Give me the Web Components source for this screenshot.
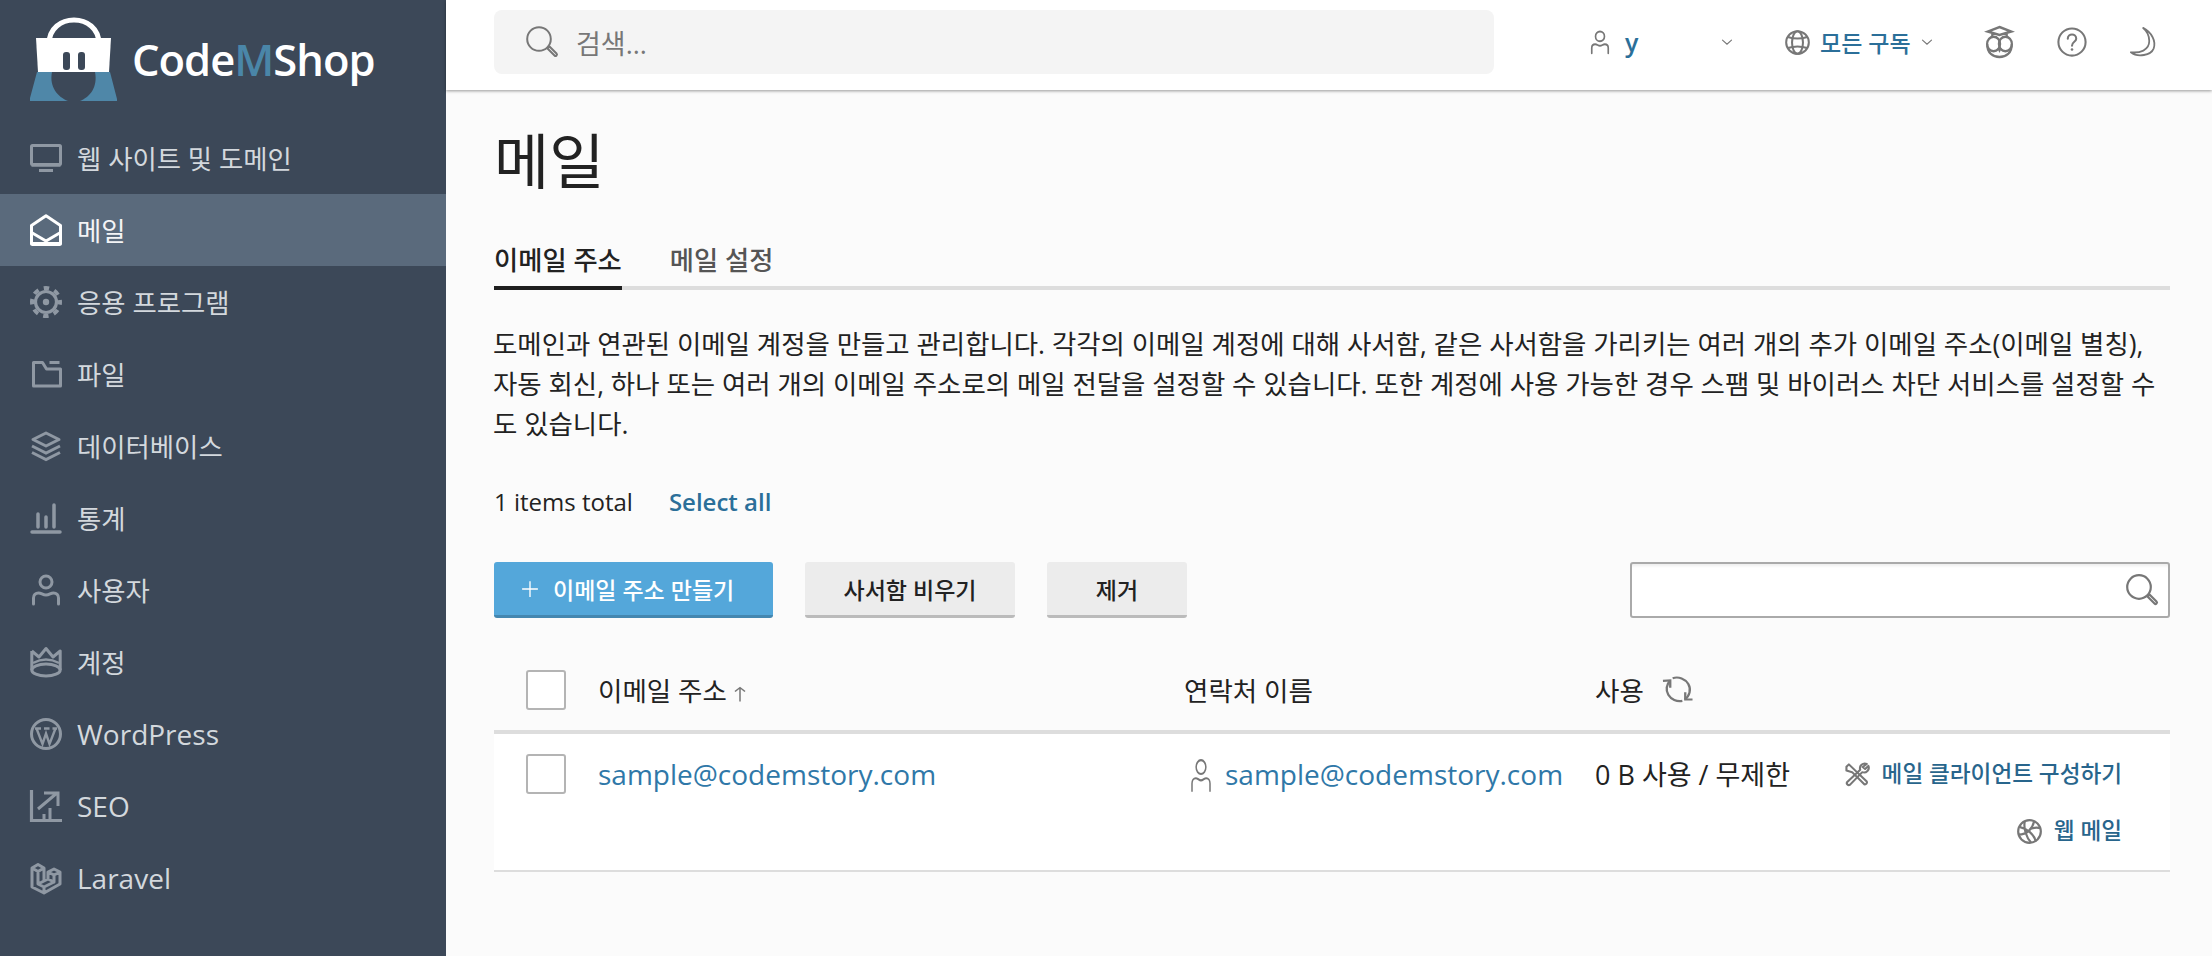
<!DOCTYPE html>
<html lang="ko">
<head>
<meta charset="utf-8">
<title>메일</title>
<style>
  html, body { margin: 0; height: 100%; }
  body {
    font-family: "Open Sans", "Noto Sans CJK KR", sans-serif;
    font-size: 24px;
    color: #222;
    background: #fbfbfb;
    overflow: hidden;
  }
</style>
</head>
<body>
<app-shell>
  <side-nav slot="side">
    <nav-item icon="monitor">웹 사이트 및 도메인</nav-item>
    <nav-item icon="mail" active>메일</nav-item>
    <nav-item icon="gear">응용 프로그램</nav-item>
    <nav-item icon="folder">파일</nav-item>
    <nav-item icon="layers">데이터베이스</nav-item>
    <nav-item icon="bars">통계</nav-item>
    <nav-item icon="person">사용자</nav-item>
    <nav-item icon="crown">계정</nav-item>
    <nav-item icon="wp" latin>WordPress</nav-item>
    <nav-item icon="seo" latin>SEO</nav-item>
    <nav-item icon="laravel" latin>Laravel</nav-item>
  </side-nav>
  <top-bar slot="top"></top-bar>
  <page-head></page-head>
  <mail-toolbar></mail-toolbar>
  <mail-table>
    <mail-row email="sample@codemstory.com" usage="0 B 사용 / 무제한"></mail-row>
  </mail-table>
</app-shell>

<script>
const ICONS = {
  monitor: '<rect x="1.5" y="3.5" width="29" height="19" rx="1"/><path d="M1.5 23h29" stroke-width="3.5"/><path d="M9 28.5h14" stroke-width="3"/>',
  mail: '<path d="M1.5 30V11.5L16 1.8 30.5 11.5V30Z" stroke-linejoin="round"/><path d="M1.5 30H30.5" stroke-width="4"/><path d="M1.5 18.5 16 27 30.5 18.5"/>',
  gear: '<circle cx="16" cy="16" r="10.5" stroke-width="3.2"/><circle cx="16" cy="16" r="14" stroke-width="4" stroke-dasharray="5.5 5.5" stroke-dashoffset="2.75"/><circle cx="16" cy="16" r="3.2" fill="currentColor" stroke="none"/>',
  folder: '<path d="M3.5 4.5h9l4 6.5H30.5v17H3.5z" stroke-linejoin="round"/><path d="M19.5 4.5h10"/>',
  layers: '<path d="M16 3 29 9.5 16 16 3 9.5Z" stroke-linejoin="round"/><path d="M2 16 16 23 30 16"/><path d="M2 22.5 16 29.5 30 22.5"/>',
  bars: '<path d="M2 30H30" stroke-width="3.5" stroke-linecap="round"/><path d="M8 12V25M16 15V25M24 3V25" stroke-width="3.5" stroke-linecap="round"/>',
  person: '<circle cx="16" cy="8" r="6"/><path d="M3.5 30V24c0-3 2-5 5-5 3 0 4 2 7.5 2s4.5-2 7.5-2c3 0 5 2 5 5v6" stroke-linecap="round"/>',
  crown: '<path d="M1.8 5 9 11 16 2.5 23 11 30.2 5V24M1.8 5V24" stroke-linejoin="round"/><ellipse cx="16" cy="24" rx="14.2" ry="6"/><path d="M3 17Q16 10 29 17" stroke-width="2.5"/>',
  wp: '<circle cx="16" cy="16" r="14.5"/><path d="M6.5 10.5 12.5 26 16 15.5 19.5 26 25.5 10.5M5 10.5H11M14 10.5H19.5M22.5 10.5H27" stroke-width="2.4"/>',
  seo: '<path d="M1.5 0V30.5H32" stroke-width="3.2"/><path d="M8 19 27 3M14 3H28V16" stroke-width="3"/><path d="M14 30V24M20 30V18" stroke-width="3"/>',
  laravel: '<path d="M2 6 8 2.5 14 6 8 9.5ZM2 6V25L14 31 30 22V10L24 7 18 10 24 13 30 10M8 9.5V22L14 25M14 6V19M8 22 14 19 18 17M18 10V17L24 20V13M14 25 24 20M14 25V31" stroke-linejoin="round"/>',
  user: '<circle cx="16" cy="8.5" r="6.5"/><path d="M4 31V24c0-3 2-5 5-5 3 0 4 2 7 2s4-2 7-2c3 0 5 2 5 5v7" stroke-linecap="round"/>',
  globe: '<circle cx="16" cy="16" r="14.5"/><ellipse cx="16" cy="16" rx="7" ry="14.5"/><path d="M3.5 9Q16 13 28.5 9M3.5 23Q16 19 28.5 23"/>',
  owl: '<circle cx="9.5" cy="18" r="7.2"/><circle cx="22.5" cy="18" r="7.2"/><path d="M2.5 18C2 27 9 31 16 31S30 27 29.5 18"/><path d="M16 27 13.5 22H18.5Z" fill="currentColor" stroke="none"/><path d="M16 1 29 5.5 16 9 3 5.5ZM8 7.5V11M24 7.5V11"/>',
  help: '<circle cx="16" cy="16" r="14.5"/><path d="M11.5 12.5C11.5 6.5 20.5 6.5 20.5 12.5 20.5 16 16 15.5 16 20" stroke-linecap="round"/><circle cx="16" cy="24" r="1.4" fill="currentColor" stroke="none"/>',
  moon: '<path d="M15 1C25 6 30 15 27 23 24 30 9 33 1 27 11 28 22 25 22 15 22 9 19 4 15 1Z" stroke-linejoin="round"/>',
  search: '<circle cx="13" cy="13" r="11.8"/><path d="M21.5 22.5l2-2 7 7a1.4 1.4 0 01-2 2z" stroke-linejoin="round"/>',
  refresh: '<path d="M8.5 6A13.5 13.5 0 0 0 21 28.5"/><path d="M11 3.5A13.5 13.5 0 0 1 23.5 27"/><path d="M1 6.5 8.5 6V14M24 19V27H31.5"/>',
  tools: '<path d="M3 6 6 3 14 11 28 25A2.5 2.5 0 0 1 25 28.5L10 13 3 11Z" stroke-linejoin="round"/><path d="M28 2.5A6 6 0 0 0 20 10L4 25.5A2.5 2.5 0 0 0 7.5 29L22.5 13A6 6 0 0 0 30 5L26 9 23 6.5Z" stroke-linejoin="round"/>',
  web: '<circle cx="16" cy="16" r="14.5"/><path d="M3 10C12 12 22 19 24 29M10 3C8 12 12 24 18 30M22 3C20 12 13 20 2 20M16 13C21 11 26 10 30 12"/>',
  chevron: '<path d="M4 11 16 22 28 11" stroke-linecap="round"/>',
  plus: '<path d="M16 2V30M2 16H30"/>',
  arrow: '<path d="M16 31V3M8 11 16 3 24 11"/>'
}

class UiIcon extends HTMLElement {
  constructor () {
    super()
    this.attachShadow({ mode: 'open' })
  }

  connectedCallback () {
    const name = this.getAttribute('name')
    const w = this.getAttribute('w') || 32
    const h = this.getAttribute('h') || w
    const sw = this.getAttribute('sw') || 3
    this.shadowRoot.innerHTML = `
      <style>
        :host { display: inline-flex; flex: none; }
        svg { display: block; fill: none; stroke: currentColor; overflow: visible; }
      </style>
      <svg width="${w}" height="${h}" viewBox="0 0 32 32" preserveAspectRatio="none" stroke-width="${sw}">${ICONS[name]}</svg>
    `
  }
}

class AppShell extends HTMLElement {
  constructor () {
    super()
    this.attachShadow({ mode: 'open' })
  }

  connectedCallback () {
    this.shadowRoot.innerHTML = `
      <style>
        :host { display: flex; width: 2212px; height: 956px; }
        .col { flex: 1; min-width: 0; display: flex; flex-direction: column; }
        .content { padding: 0 42px 0 48px; display: flex; flex-direction: column; }
      </style>
      <slot name="side"></slot>
      <div class="col">
        <slot name="top"></slot>
        <div class="content"><slot></slot></div>
      </div>
    `
  }
}

class SideNav extends HTMLElement {
  constructor () {
    super()
    this.attachShadow({ mode: 'open' })
  }

  connectedCallback () {
    this.shadowRoot.innerHTML = `
      <style>
        :host { display: block; flex: none; width: 446px; background: #3c4858; }
        .logo { height: 122px; display: flex; align-items: flex-start; padding: 14px 0 0 30px; box-sizing: border-box; gap: 14px; }
        .word { font: 600 43.5px/1 "Open Sans", sans-serif; color: #fff; letter-spacing: -1px; margin-top: 24px; }
        .word b { font-weight: 600; color: #4a86a8; }
      </style>
      <div class="logo">
        <svg width="88" height="88" viewBox="0 0 88 88">
          <path d="M19 30C19 -2 69 -2 69 30" fill="none" stroke="#fff" stroke-width="5"/>
          <path d="M6 24H81L79 58H8Z" fill="#fff"/>
          <path d="M7 58H80L87 85 87 87H50C60 83 68 73 65 58H22C19 73 28 83 38 87H0V84Z" fill="#4f87a8"/>
          <rect x="33" y="38" width="7" height="18" rx="3" fill="#3c4858"/>
          <rect x="48" y="38" width="7" height="18" rx="3" fill="#3c4858"/>
        </svg>
        <div class="word">Code<b>M</b>Shop</div>
      </div>
      <slot></slot>
    `
  }
}

class NavItem extends HTMLElement {
  constructor () {
    super()
    this.attachShadow({ mode: 'open' })
  }

  connectedCallback () {
    const active = this.hasAttribute('active')
    const latin = this.hasAttribute('latin')
    this.shadowRoot.innerHTML = `
      <style>
        :host { display: flex; align-items: center; gap: 15px; height: 72px; padding-left: 30px; font-size: ${latin ? 28 : 26.4}px; color: ${active ? '#f3f4f6' : '#d3d8dd'}; background: ${active ? '#5a6a7c' : 'transparent'}; }
        .ic { color: ${active ? '#fff' : '#8f98a3'}; display: flex; }
        .txt { margin-bottom: ${latin ? 0 : 2}px; }
      </style>
      <span class="ic"><ui-icon name="${this.getAttribute('icon')}"></ui-icon></span>
      <span class="txt"><slot></slot></span>
    `
  }
}

class TopBar extends HTMLElement {
  constructor () {
    super()
    this.attachShadow({ mode: 'open' })
  }

  connectedCallback () {
    this.shadowRoot.innerHTML = `
      <style>
        :host { display: flex; align-items: center; height: 90px; flex: none; background: #fff; box-shadow: 0 1px 3px rgba(0,0,0,.4); padding-left: 48px; position: relative; color: #777; }
        .search { width: 1000px; height: 64px; margin-bottom: 6px; box-sizing: border-box; background: #f4f4f4; border-radius: 8px; display: flex; align-items: center; gap: 18px; padding-left: 32px; font-size: 27px; color: #777; }
        .right { display: flex; align-items: center; margin-left: 95px; margin-bottom: 6px; }
        .link { color: #2b6f99; font-weight: 600; font-size: 25px; }
        .han { font-weight: 500; font-size: 23px; }
      </style>
      <div class="search"><ui-icon name="search" sw="2"></ui-icon><span>검색...</span></div>
      <div class="right">
        <ui-icon name="user" w="22" h="24" sw="2.4"></ui-icon>
        <span class="link" style="margin-left:14px;width:96px">y</span>
        <ui-icon name="chevron" w="12" sw="3"></ui-icon>
        <ui-icon name="globe" w="25" h="25" sw="2.6" style="margin-left:52px"></ui-icon>
        <span class="link han" style="margin-left:10px;width:101px">모든 구독</span>
        <ui-icon name="chevron" w="12" sw="3"></ui-icon>
        <ui-icon name="owl" w="29" h="32" sw="2.4" style="margin-left:52px"></ui-icon>
        <ui-icon name="help" w="30" h="30" sw="2.2" style="margin-left:43px"></ui-icon>
        <ui-icon name="moon" w="28" h="30" sw="2" style="margin-left:43px"></ui-icon>
      </div>
    `
  }
}

class PageHead extends HTMLElement {
  constructor () {
    super()
    this.attachShadow({ mode: 'open' })
  }

  connectedCallback () {
    this.shadowRoot.innerHTML = `
      <style>
        :host { display: block; }
        h1 { margin: 34px 0 0; font-size: 60px; line-height: 74px; font-weight: 400; color: #222; }
        .tabs { display: flex; gap: 48px; margin-top: 42px; border-bottom: 4px solid #ddd; height: 46px; font-size: 26.3px; }
        .tab { height: 46px; line-height: 40px; font-weight: 500; color: #555; }
        .tab.on { color: #222; border-bottom: 4px solid #1f1f1f; }
        p { margin: 34px 0 0 -1px; font-size: 26.45px; line-height: 40px; color: #222; }
        .count { display: flex; gap: 36px; margin-top: 38px; font-size: 24px; line-height: 40px; }
        .count a { color: #2b6f99; font-weight: 600; }
      </style>
      <h1>메일</h1>
      <div class="tabs"><div class="tab on">이메일 주소</div><div class="tab">메일 설정</div></div>
      <p>도메인과 연관된 이메일 계정을 만들고 관리합니다. 각각의 이메일 계정에 대해 사서함, 같은 사서함을 가리키는 여러 개의 추가 이메일 주소(이메일 별칭), 자동 회신, 하나 또는 여러 개의 이메일 주소로의 메일 전달을 설정할 수 있습니다. 또한 계정에 사용 가능한 경우 스팸 및 바이러스 차단 서비스를 설정할 수도 있습니다.</p>
      <div class="count"><span>1 items total</span><a>Select all</a></div>
    `
  }
}

class MailToolbar extends HTMLElement {
  constructor () {
    super()
    this.attachShadow({ mode: 'open' })
  }

  connectedCallback () {
    this.shadowRoot.innerHTML = `
      <style>
        :host { display: flex; align-items: flex-start; gap: 32px; margin-top: 40px; }
        .btn { height: 56px; box-sizing: border-box; display: flex; align-items: center; justify-content: center; gap: 14px; background: #ececec; border-bottom: 3px solid #bbb; border-radius: 3px; font-size: 23px; font-weight: 500; color: #222; }
        .primary { width: 279px; justify-content: flex-start; padding-left: 27px; background: #54a7da; border-bottom-color: #4487b0; color: #fff; }
        .find { margin-left: auto; width: 540px; height: 56px; box-sizing: border-box; background: #fff; border: 2px solid #aaa; border-radius: 3px; box-shadow: inset 0 4px 3px -2px #eee; display: flex; align-items: center; justify-content: flex-end; padding-right: 10px; color: #777; }
      </style>
      <div class="btn primary"><ui-icon name="plus" w="18" sw="2.4"></ui-icon>이메일 주소 만들기</div>
      <div class="btn" style="width:210px">사서함 비우기</div>
      <div class="btn" style="width:140px">제거</div>
      <div class="find"><ui-icon name="search" w="32" sw="2.2"></ui-icon></div>
    `
  }
}

class MailTable extends HTMLElement {
  constructor () {
    super()
    this.attachShadow({ mode: 'open' })
  }

  connectedCallback () {
    this.shadowRoot.innerHTML = `
      <style>
        :host { display: block; margin-top: 33px; --cols: 104px 586px 411px 230px 1fr; }
        .head { display: grid; grid-template-columns: var(--cols); align-items: center; height: 77px; padding-bottom: 2px; border-bottom: 4px solid #ddd; font-size: 26.5px; }
        .box { width: 40px; height: 40px; box-sizing: border-box; margin-left: 32px; border: 2px solid #b4b4b4; border-radius: 3px; background: #fff; }
        .cell { display: flex; align-items: center; }
        .sort { color: #777; margin-left: 3px; margin-top: 4px; }
        .sync { color: #777; margin-left: 18px; margin-top: 8px; }
      </style>
      <div class="head">
        <div class="box"></div>
        <div class="cell">이메일 주소<span class="sort"><ui-icon name="arrow" w="20" h="16" sw="2.4"></ui-icon></span></div>
        <div class="cell">연락처 이름</div>
        <div class="cell">사용<span class="sync"><ui-icon name="refresh" w="31" h="29" sw="2.4"></ui-icon></span></div>
      </div>
      <slot></slot>
    `
  }
}

class MailRow extends HTMLElement {
  constructor () {
    super()
    this.attachShadow({ mode: 'open' })
  }

  connectedCallback () {
    const email = this.getAttribute('email')
    this.shadowRoot.innerHTML = `
      <style>
        :host { display: grid; grid-template-columns: var(--cols); align-items: start; height: 138px; box-sizing: border-box; padding-top: 20px; background: #fff; border-bottom: 2px solid #ddd; font-size: 28px; }
        .box { width: 40px; height: 40px; box-sizing: border-box; margin-left: 32px; border: 2px solid #b4b4b4; border-radius: 3px; background: #fff; }
        a { color: #2f78a8; line-height: 40px; }
        .cell { display: flex; align-items: center; gap: 12px; height: 40px; }
        .contact { padding-left: 5px; color: #777; }
        .contact ui-icon { margin-top: 2px; }
        .acts { display: flex; flex-direction: column; align-items: flex-end; padding-right: 48px; gap: 21px; margin-top: 2px; color: #777; }
        .act { display: flex; align-items: center; gap: 12px; height: 36px; font-size: 22.6px; font-weight: 500; color: #777; white-space: nowrap; }
        .act a { color: #28658c; line-height: 36px; }
        .usage { color: #222; font-size: 27px; white-space: nowrap; margin-top: -1px; }
      </style>
      <div class="box"></div>
      <div class="cell"><a>${email}</a></div>
      <div class="cell contact"><ui-icon name="user" w="24" h="34" sw="2"></ui-icon><a>${email}</a></div>
      <div class="cell usage">${this.getAttribute('usage')}</div>
      <div class="acts">
        <div class="act"><ui-icon name="tools" w="26" h="25" sw="2.6"></ui-icon><a>메일 클라이언트 구성하기</a></div>
        <div class="act"><ui-icon name="web" w="25" h="25" sw="2.8"></ui-icon><a>웹 메일</a></div>
      </div>
    `
  }
}

customElements.define('ui-icon', UiIcon)
customElements.define('app-shell', AppShell)
customElements.define('side-nav', SideNav)
customElements.define('nav-item', NavItem)
customElements.define('top-bar', TopBar)
customElements.define('page-head', PageHead)
customElements.define('mail-toolbar', MailToolbar)
customElements.define('mail-table', MailTable)
customElements.define('mail-row', MailRow)
</script>
</body>
</html>
